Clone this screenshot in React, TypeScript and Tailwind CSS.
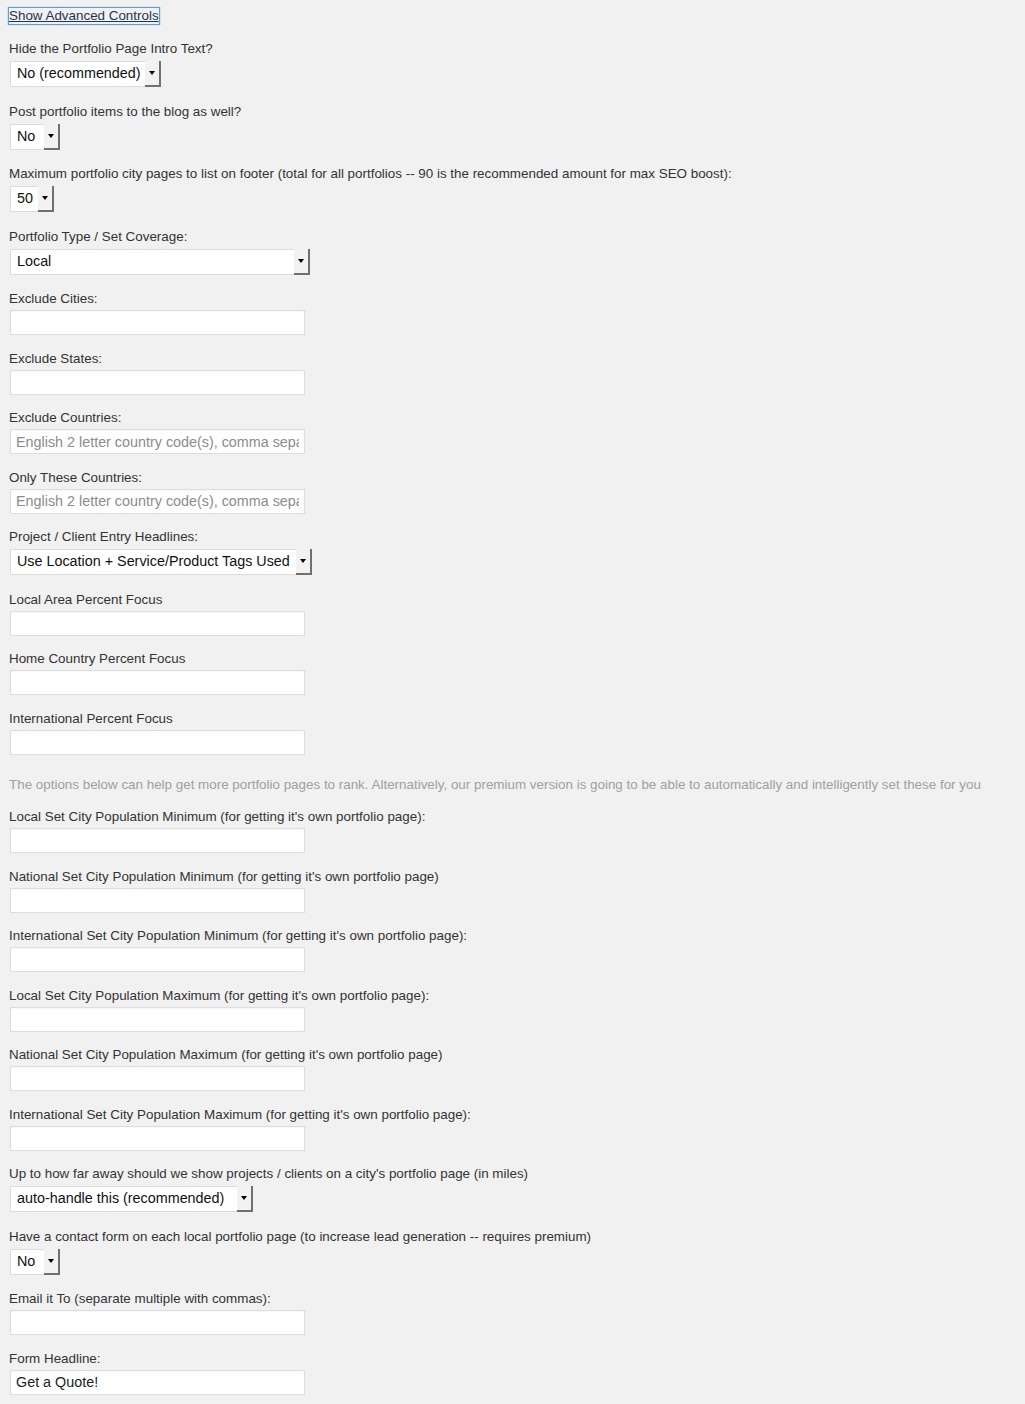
import React from "react";

type Field =
  | { kind: "select"; label: string; value: string; width: number }
  | { kind: "input"; label: string; placeholder?: string; value?: string }
  | { kind: "note"; text: string };

const PH = "English 2 letter country code(s), comma separated";

const fields: Field[] = [
  { kind: "select", label: "Hide the Portfolio Page Intro Text?", value: "No (recommended)", width: 151 },
  { kind: "select", label: "Post portfolio items to the blog as well?", value: "No", width: 50 },
  {
    kind: "select",
    label:
      "Maximum portfolio city pages to list on footer (total for all portfolios -- 90 is the recommended amount for max SEO boost):",
    value: "50",
    width: 44,
  },
  { kind: "select", label: "Portfolio Type / Set Coverage:", value: "Local", width: 300 },
  { kind: "input", label: "Exclude Cities:" },
  { kind: "input", label: "Exclude States:" },
  { kind: "input", label: "Exclude Countries:", placeholder: PH },
  { kind: "input", label: "Only These Countries:", placeholder: PH },
  { kind: "select", label: "Project / Client Entry Headlines:", value: "Use Location + Service/Product Tags Used", width: 302 },
  { kind: "input", label: "Local Area Percent Focus" },
  { kind: "input", label: "Home Country Percent Focus" },
  { kind: "input", label: "International Percent Focus" },
  {
    kind: "note",
    text: "The options below can help get more portfolio pages to rank. Alternatively, our premium version is going to be able to automatically and intelligently set these for you",
  },
  { kind: "input", label: "Local Set City Population Minimum (for getting it's own portfolio page):" },
  { kind: "input", label: "National Set City Population Minimum (for getting it's own portfolio page)" },
  { kind: "input", label: "International Set City Population Minimum (for getting it's own portfolio page):" },
  { kind: "input", label: "Local Set City Population Maximum (for getting it's own portfolio page):" },
  { kind: "input", label: "National Set City Population Maximum (for getting it's own portfolio page)" },
  { kind: "input", label: "International Set City Population Maximum (for getting it's own portfolio page):" },
  {
    kind: "select",
    label: "Up to how far away should we show projects / clients on a city's portfolio page (in miles)",
    value: "auto-handle this (recommended)",
    width: 243,
  },
  {
    kind: "select",
    label: "Have a contact form on each local portfolio page (to increase lead generation -- requires premium)",
    value: "No",
    width: 50,
  },
  { kind: "input", label: "Email it To (separate multiple with commas):" },
  { kind: "input", label: "Form Headline:", value: "Get a Quote!" },
];

function Label({ text }: { text: string }) {
  return <div className="h-[18px] text-[13.4px] leading-[18px] text-[#333] whitespace-nowrap">{text}</div>;
}

function Select({ value, width }: { value: string; width: number }) {
  return (
    <div
      className="ml-[1px] mt-[3px] flex h-[26px] items-stretch border border-[#dcdcdc] bg-white"
      style={{ width }}
    >
      <div className="flex flex-1 items-center overflow-hidden whitespace-nowrap pl-[6px] text-[14.35px] text-[#111]">
        {value}
      </div>
      <div className="relative -mt-[1px] -mr-[1px] -mb-[1px] flex w-[16px] items-center justify-center border-r-2 border-b-2 border-[#707070] bg-[#f2f2f2]">
        <div className="h-0 w-0 border-x-[3px] border-t-[4px] border-x-transparent border-t-black" />
      </div>
    </div>
  );
}

function Input({ placeholder, value }: { placeholder?: string; value?: string }) {
  return (
    <input
      readOnly
      defaultValue={value}
      placeholder={placeholder}
      className="ml-[1px] mt-[2px] block h-[25px] w-[295px] border border-[#dddddd] bg-white pl-[5px] pr-[5px] text-[14.35px] text-[#222] shadow-[inset_0_1px_2px_rgba(0,0,0,0.04)] outline-none placeholder:text-[#8c8c8c]"
      style={{ fontFamily: '"Liberation Sans", Arial, Helvetica, sans-serif' }}
    />
  );
}

export default function App() {
  return (
    <div
      className="min-h-[1404px] w-full bg-[#f1f1f1] pl-[9px] pt-[7px]"
      style={{ fontFamily: '"Liberation Sans", Arial, Helvetica, sans-serif' }}
    >
      <div className="-ml-[1px] mb-[15px] block h-[18px] w-fit border border-[#5b9dd9] text-[13.4px] leading-[16px] text-[#1e3552] underline shadow-[0_0_1px_rgba(30,140,190,0.8)]">
        Show Advanced Controls
      </div>
      {fields.map((f, i) => {
        if (f.kind === "note") {
          return (
            <div key={i} className="mt-[21.5px] mb-[14px] h-[18px] whitespace-nowrap text-[13.4px] leading-[18px] text-[#a0a0a0]">
              {f.text}
            </div>
          );
        }
        if (f.kind === "select") {
          return (
            <div key={i} className="mb-[15.5px]">
              <Label text={f.label} />
              <Select value={f.value} width={f.width} />
            </div>
          );
        }
        return (
          <div key={i} className="mb-[14.5px]">
            <Label text={f.label} />
            <Input placeholder={f.placeholder} value={f.value} />
          </div>
        );
      })}
    </div>
  );
}
